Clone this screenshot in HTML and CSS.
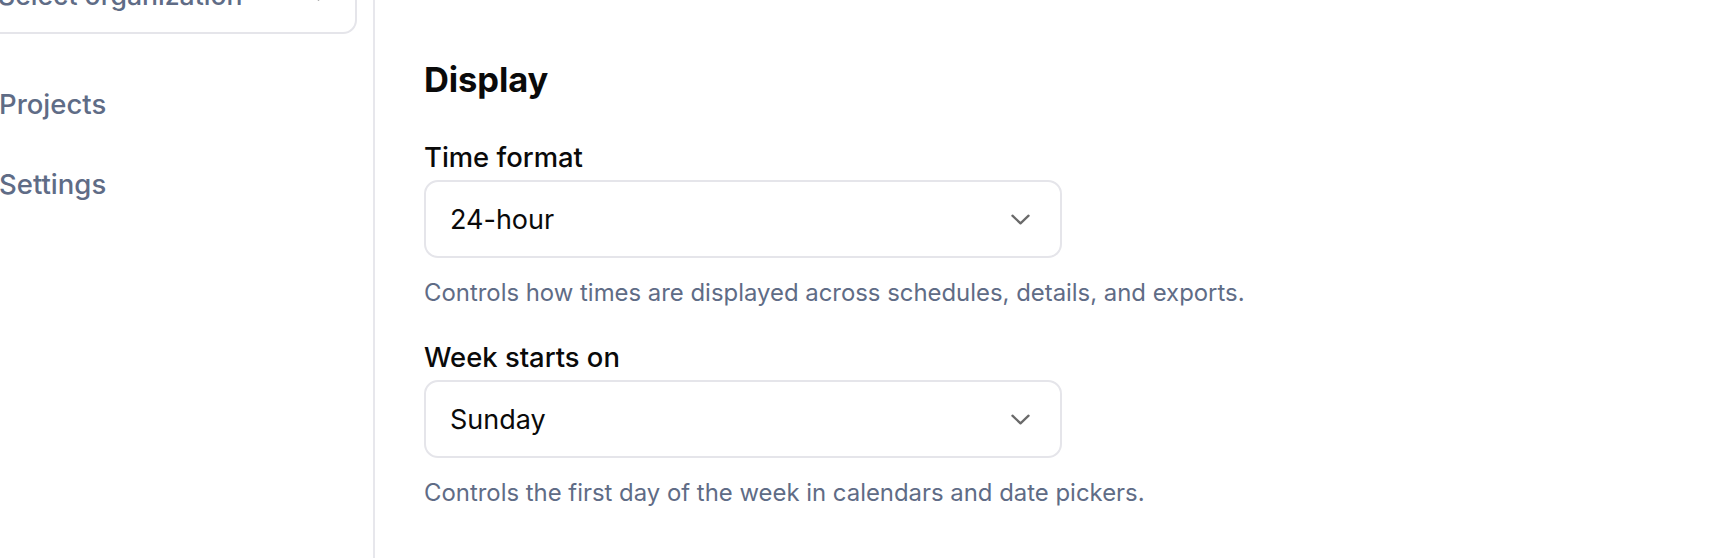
FILE: index.html
```html
<!DOCTYPE html>
<html lang="en">
<head>
<meta charset="utf-8">
<title>Settings – Display</title>
<link rel="stylesheet" href="styles.css">
</head>
<body>
<div class="app">
  <aside class="sidebar">
    <button class="org-select" type="button">
      <span class="org-label">Select organization</span>
      <svg class="chevron" viewBox="0 0 20 11" aria-hidden="true"><polyline points="1.5,1.5 10,9.5 18.5,1.5"/></svg>
    </button>
    <nav class="nav">
      <a class="nav-item" href="#">Projects</a>
      <a class="nav-item" href="#">Settings</a>
    </nav>
  </aside>
  <main class="main">
    <h2 class="section-title">Display</h2>
    <div class="fields">
      <div class="field">
        <label class="field-label">Time format</label>
        <div class="select">
          <span class="select-value">24-hour</span>
          <svg class="chevron" viewBox="0 0 20 11" aria-hidden="true"><polyline points="1.5,1.5 10,9.5 18.5,1.5"/></svg>
        </div>
        <p class="field-help">Controls how times are displayed across schedules, details, and exports.</p>
      </div>
      <div class="field">
        <label class="field-label">Week starts on</label>
        <div class="select">
          <span class="select-value">Sunday</span>
          <svg class="chevron" viewBox="0 0 20 11" aria-hidden="true"><polyline points="1.5,1.5 10,9.5 18.5,1.5"/></svg>
        </div>
        <p class="field-help">Controls the first day of the week in calendars and date pickers.</p>
      </div>
    </div>
  </main>
</div>
</body>
</html>
```

FILE: styles.css
```css
* { box-sizing: border-box; }

html, body {
  margin: 0;
  padding: 0;
  background: #ffffff;
  overflow: hidden;
}

body {
  font-family: "Inter", "Noto Sans", "Liberation Sans", sans-serif;
  color: #0a0a0a;
}

.app {
  display: flex;
  min-height: 100vh;
}

.sidebar {
  flex: 0 0 415px;
  margin: -60px 0 0 -40px;
  padding: 16px 16px;
  border-right: 2px solid #e7e7ec;
  display: flex;
  flex-direction: column;
}

.org-select {
  height: 78px;
  width: 100%;
  display: flex;
  align-items: center;
  justify-content: space-between;
  padding: 0 27px 0 20px;
  background: #ffffff;
  border: 2px solid #e5e5ea;
  border-radius: 14px;
  font: inherit;
  font-size: 26.6px;
  font-weight: 500;
  color: #5f6c86;
}

.org-label { line-height: normal; }

.nav {
  display: flex;
  flex-direction: column;
  margin-top: 30px;
}

.nav-item {
  display: block;
  padding: 21px 0 21px 23px;
  font-size: 27.5px;
  line-height: 38px;
  font-weight: 500;
  color: #5f6c86;
  text-decoration: none;
}

.main {
  flex: 1 1 auto;
  padding: 58px 0 0 49px;
}

.section-title {
  margin: 0;
  font-size: 34.5px;
  line-height: 44px;
  font-weight: 700;
  letter-spacing: -0.1px;
  color: #0a0a0a;
}

.fields {
  display: flex;
  flex-direction: column;
  gap: 29px;
  margin-top: 36px;
}

.field {
  display: flex;
  flex-direction: column;
  width: 638px;
}

.field-label {
  font-size: 27.4px;
  line-height: 38px;
  font-weight: 500;
  color: #0a0a0a;
}

.select {
  margin-top: 4px;
  height: 78px;
  display: flex;
  align-items: center;
  justify-content: space-between;
  padding: 0 30px 0 24px;
  background: #ffffff;
  border: 2px solid #e5e5ea;
  border-radius: 14px;
}

.select-value {
  font-size: 27px;
  color: #0a0a0a;
}

.chevron {
  width: 19px;
  height: 11px;
  fill: none;
  stroke: #6a6a6a;
  stroke-width: 2.4;
  stroke-linecap: round;
  stroke-linejoin: round;
  flex: 0 0 auto;
}

.field-help {
  margin: 19px 0 0;
  font-size: 23.9px;
  line-height: 32px;
  color: #5f6c86;
  white-space: nowrap;
}
```
